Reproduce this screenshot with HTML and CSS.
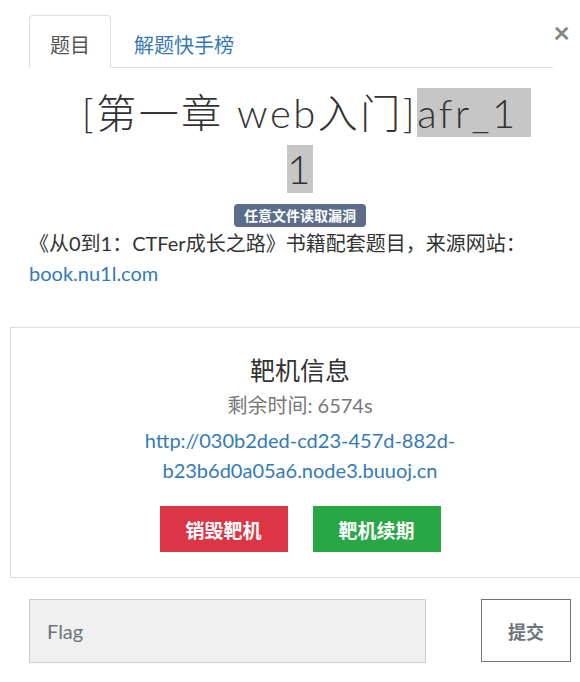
FILE: index.html
```html
<!DOCTYPE html>
<html lang="zh-CN">
<head>
    <meta charset="UTF-8">
    <meta name="viewport" content="width=device-width, initial-scale=1.0">
    <title>afr_1</title>
    <link rel="stylesheet" href="styles.css">
</head>
<body>
    <div class="modal">
        <button class="close" type="button">&times;</button>

        <!-- tabs -->
        <ul class="nav-tabs">
            <li class="tab active">题目</li>
            <li class="tab">解题快手榜</li>
        </ul>

        <h2 class="challenge-name">[第一章 web入门]<span class="mark mark-first">afr_1&nbsp;</span><br><span class="mark">1</span></h2>

        <div class="tags">
            <span class="badge">任意文件读取漏洞</span>
        </div>

        <p class="description">《从0到1：CTFer成长之路》书籍配套题目，来源网站：<br><a href="#">book.nu1l.com</a></p>

        <!-- instance -->
        <div class="vm-box">
            <h3 class="vm-title">靶机信息</h3>
            <div class="vm-time">剩余时间: 6574s</div>
            <a class="vm-url" href="#">http://030b2ded-cd23-457d-882d-<br>b23b6d0a05a6.node3.buuoj.cn</a>
            <div class="vm-actions">
                <button class="btn btn-danger" type="button">销毁靶机</button>
                <button class="btn btn-success" type="button">靶机续期</button>
            </div>
        </div>

        <div class="flag-row">
            <input class="flag-input" type="text" placeholder="Flag">
            <button class="btn-submit" type="button">提交</button>
        </div>
    </div>
</body>
</html>
```

FILE: styles.css
```css
html, body {
    margin: 0;
    padding: 0;
    overflow: hidden;
    background: #fff;
}
body {
    font-family: "Lato", "Noto Sans CJK SC", sans-serif;
    color: #333;
}
a {
    color: #337ab7;
    text-decoration: none;
}
.modal {
    position: relative;
    width: 580px;
    margin-left: 10px;
    padding-top: 15px;
}
.close {
    position: absolute;
    top: 17px;
    right: 20px;
    background: none;
    border: none;
    padding: 0;
    font-family: "Lato", sans-serif;
    font-size: 29px;
    font-weight: 700;
    line-height: 1;
    color: #858585;
}
.nav-tabs {
    display: flex;
    list-style: none;
    margin: 0 37px 0 19px;
    padding: 0;
    border-bottom: 1px solid #ddd;
}
.tab {
    padding: 0 20px;
    height: 51px;
    line-height: 58px;
    font-size: 20px;
    color: #337ab7;
    border: 1px solid transparent;
    border-radius: 4px 4px 0 0;
    margin: 0 2px -1px 0;
}
.tab.active {
    color: #555;
    background: #fff;
    border-color: #ddd #ddd #fff;
}
.challenge-name {
    margin: 17px 0 0;
    text-align: center;
    font-family: "Lato", "Noto Sans CJK SC", sans-serif;
    font-size: 40px;
    font-weight: 300;
    letter-spacing: 2.5px;
    line-height: 56px;
    color: #333;
}
.mark {
    background: #c6c6c6;
}
.mark-first {
    padding-top: 1px;
    margin-right: -13px;
}
.tags {
    margin-top: 6px;
    text-align: center;
    line-height: 23px;
}
.badge {
    display: inline-block;
    padding: 0 10px;
    background: #5b6d8b;
    color: #fff;
    font-size: 14px;
    font-weight: 700;
    line-height: 23px;
    border-radius: 4px;
}
.description {
    margin: 1px 0 0 19px;
    font-size: 20px;
    line-height: 30px;
    color: #333;
}
.vm-box {
    margin-top: 39px;
    border: 1px solid #ddd;
    height: 251px;
    text-align: center;
    padding-top: 22px;
    box-sizing: border-box;
}
.vm-title {
    margin: 0;
    font-size: 25px;
    font-weight: 400;
    line-height: 40px;
    color: #333;
}
.vm-time {
    font-size: 20px;
    line-height: 30px;
    color: #777;
}
.vm-url {
    display: block;
    margin-top: 5px;
    font-size: 20px;
    line-height: 30px;
}
.vm-actions {
    display: flex;
    justify-content: center;
    gap: 25px;
    margin-top: 21px;
}
.btn {
    width: 128px;
    height: 46px;
    border: none;
    color: #fff;
    font-family: "Lato", "Noto Sans CJK SC", sans-serif;
    font-size: 19px;
    font-weight: 700;
}
.btn-danger {
    background: #dc3545;
}
.btn-success {
    background: #28a745;
}
.flag-row {
    display: flex;
    margin: 21px 0 0 19px;
    gap: 55px;
}
.flag-input {
    width: 397px;
    height: 64px;
    box-sizing: border-box;
    background: #f0f0f0;
    border: 1px solid #ccc;
    padding: 0 17px;
    font-family: "Lato", sans-serif;
    font-size: 20px;
    color: #495057;
}
.flag-input::placeholder {
    color: #6c757d;
}
.btn-submit {
    width: 90px;
    height: 63px;
    background: #fff;
    border: 1px solid #6c757d;
    color: #6c757d;
    font-family: "Lato", "Noto Sans CJK SC", sans-serif;
    font-size: 18px;
    font-weight: 700;
}
```
